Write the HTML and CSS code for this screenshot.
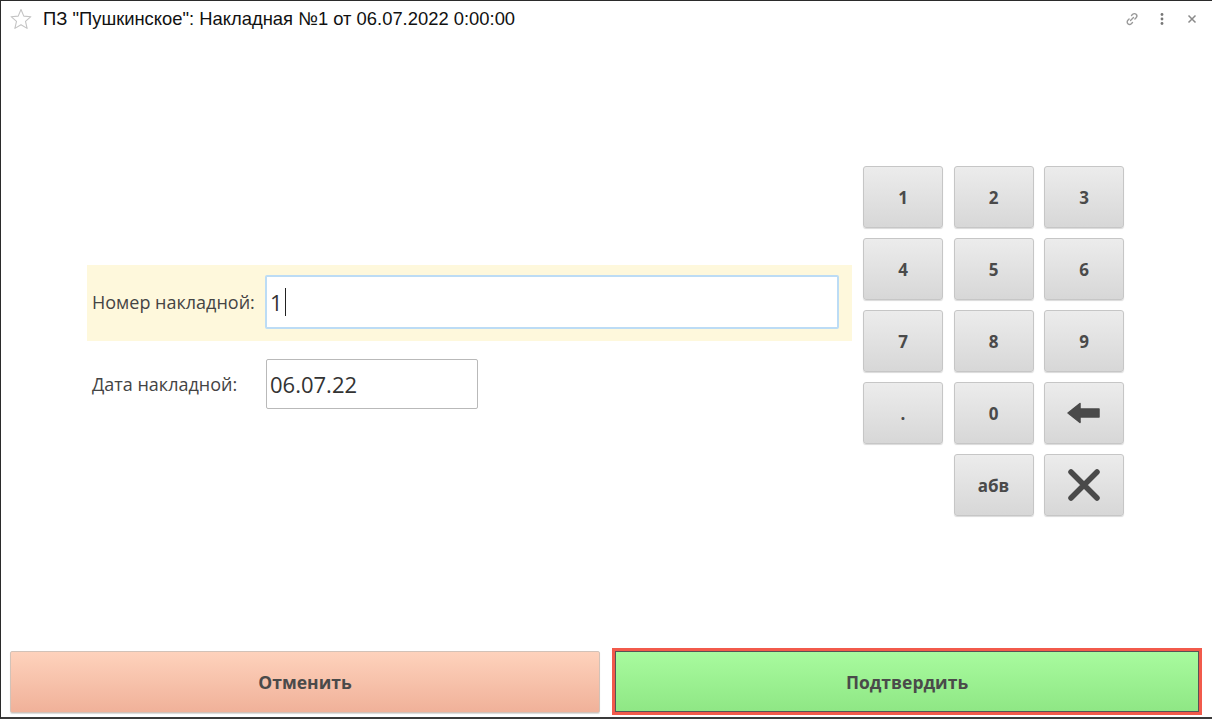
FILE: index.html
```html
<!DOCTYPE html>
<html lang="ru">
  <head>
    <meta charset="utf-8">
    <title>Накладная</title>
    <link rel="stylesheet" href="styles.css">
  </head>
  <body>
    <div class="window">
      <div class="titlebar">
        <svg class="star" width="24" height="24" viewBox="0 0 24 24">
          <path d="M12 2.5l2.8 6.6 7.1.6-5.4 4.7 1.6 7-6.1-3.7-6.1 3.7 1.6-7-5.4-4.7 7.1-.6z" fill="none" stroke="#c4c4c4" stroke-width="1.1" stroke-linejoin="round"/>
        </svg>
        <div class="title">ПЗ "Пушкинское": Накладная №1 от 06.07.2022 0:00:00</div>
        <div class="tools">
          <svg width="16" height="16" viewBox="0 0 16 16">
            <path d="M6.5 9.5l3-3M7.5 4.5l1.2-1.2a2.4 2.4 0 0 1 3.4 3.4L10.9 7.9M8.5 11.5l-1.2 1.2a2.4 2.4 0 0 1-3.4-3.4L5.1 8.1" fill="none" stroke="#9a9a9a" stroke-width="1.4" stroke-linecap="round"/>
          </svg>
          <svg width="16" height="16" viewBox="0 0 16 16">
            <circle cx="8" cy="3.5" r="1.4" fill="#777"/>
            <circle cx="8" cy="8" r="1.4" fill="#777"/>
            <circle cx="8" cy="12.5" r="1.4" fill="#777"/>
          </svg>
          <svg width="16" height="16" viewBox="0 0 16 16">
            <path d="M4.5 4.5l7 7M11.5 4.5l-7 7" stroke="#8a8a8a" stroke-width="1.5"/>
          </svg>
        </div>
      </div>

      <div class="content">
        <div class="form">
          <div class="row row-active">
            <label class="label">Номер накладной:</label>
            <div class="input input-focus"><span>1</span><i class="caret"></i></div>
          </div>
          <div class="row">
            <label class="label">Дата накладной:</label>
            <div class="input input-date">06.07.22</div>
          </div>
        </div>

        <div class="keypad">
          <button class="key">1</button>
          <button class="key">2</button>
          <button class="key">3</button>
          <button class="key">4</button>
          <button class="key">5</button>
          <button class="key">6</button>
          <button class="key">7</button>
          <button class="key">8</button>
          <button class="key">9</button>
          <button class="key">.</button>
          <button class="key">0</button>
          <button class="key">
            <svg width="36" height="24" viewBox="0 0 36 24">
              <path d="M2 12L14 2.5V8h19v8H14v5.5z" fill="#4a4a4a" stroke="#4a4a4a" stroke-width="1.5" stroke-linejoin="round"/>
            </svg>
          </button>
          <span></span>
          <button class="key">абв</button>
          <button class="key">
            <svg width="34" height="34" viewBox="0 0 34 34">
              <path d="M4 4l26 26M30 4L4 30" stroke="#4a4a4a" stroke-width="5.5" stroke-linecap="round"/>
            </svg>
          </button>
        </div>
      </div>

      <div class="footer">
        <button class="action cancel">Отменить</button>
        <div class="confirm-wrap">
          <button class="action confirm">Подтвердить</button>
        </div>
      </div>
    </div>
  </body>
</html>
```

FILE: styles.css
```css
* {
  box-sizing: border-box;
}

body {
  margin: 0;
  background: #fff;
  font-family: "Open Sans", sans-serif;
}

.window {
  width: 1212px;
  height: 719px;
  border-top: 1px solid #2b2b2b;
  border-left: 1px solid #2b2b2b;
  border-bottom: 2px solid #3a3a3a;
  display: flex;
  flex-direction: column;
}

.titlebar {
  height: 35px;
  display: flex;
  align-items: center;
  padding-left: 8px;
}

.star {
  margin-right: 10px;
}

.title {
  font-family: "Liberation Sans", Arial, sans-serif;
  font-size: 18.4px;
  color: #111;
  flex: 1;
  padding-top: 1px;
}

.tools {
  display: flex;
  gap: 14px;
  padding-right: 12px;
}

.content {
  flex: 1;
  display: flex;
  padding-left: 86px;
  padding-top: 130px;
}

.form {
  width: 765px;
  margin-top: 99px;
}

.row {
  display: flex;
  align-items: center;
  padding: 0 13px 0 5px;
}

.row-active {
  background: #fef8dc;
  height: 76px;
  padding-top: 10px;
  padding-bottom: 12px;
  margin-bottom: 18px;
}

.label {
  width: 173px;
  font-size: 18px;
  color: #444;
}

.input {
  height: 50px;
  border: 1px solid #b9b9b9;
  border-radius: 2px;
  background: #fff;
  font-size: 22px;
  color: #333;
  display: flex;
  align-items: center;
  padding-left: 3px;
}

.input-focus {
  flex: 1;
  height: 54px;
  border: 2px solid #bcdcf5;
  padding-left: 3px;
}

.input-date {
  width: 212px;
  margin-left: 1px;
}

.caret {
  display: inline-block;
  width: 1px;
  height: 28px;
  background: #222;
  margin-left: 2px;
}

.keypad {
  margin-left: 11px;
  display: grid;
  grid-template-columns: repeat(3, 80px);
  grid-auto-rows: 62px;
  column-gap: 10.5px;
  row-gap: 10px;
  align-self: flex-start;
}

.key {
  border: 1px solid #c6c6c6;
  border-radius: 3px;
  background: linear-gradient(#ececec, #d7d7d7);
  box-shadow: 0 1px 1px rgba(0, 0, 0, 0.15);
  font-family: "Open Sans", sans-serif;
  font-weight: bold;
  font-size: 17px;
  color: #4a4a4a;
  display: flex;
  align-items: center;
  justify-content: center;
  padding: 0;
}

.footer {
  display: flex;
  gap: 12px;
  padding: 0 10px 2px 9px;
}

.action {
  font-family: "Open Sans", sans-serif;
  font-weight: bold;
  font-size: 17.5px;
  color: #4a4a4a;
  height: 62px;
  border-radius: 2px;
}

.cancel {
  width: 590px;
  margin-top: 3px;
  border: 1px solid #d2c2b8;
  background: linear-gradient(#fed2bc, #f0b199);
  box-shadow: 0 1px 1px rgba(0, 0, 0, 0.15);
}

.confirm-wrap {
  flex: 1;
  border: 3px solid #f25a4b;
  padding: 0;
}

.confirm {
  width: 100%;
  height: 61px;
  border: 1px solid #555;
  border-radius: 0;
  background: linear-gradient(#a8fb9e, #8fe785);
  display: block;
}
```
